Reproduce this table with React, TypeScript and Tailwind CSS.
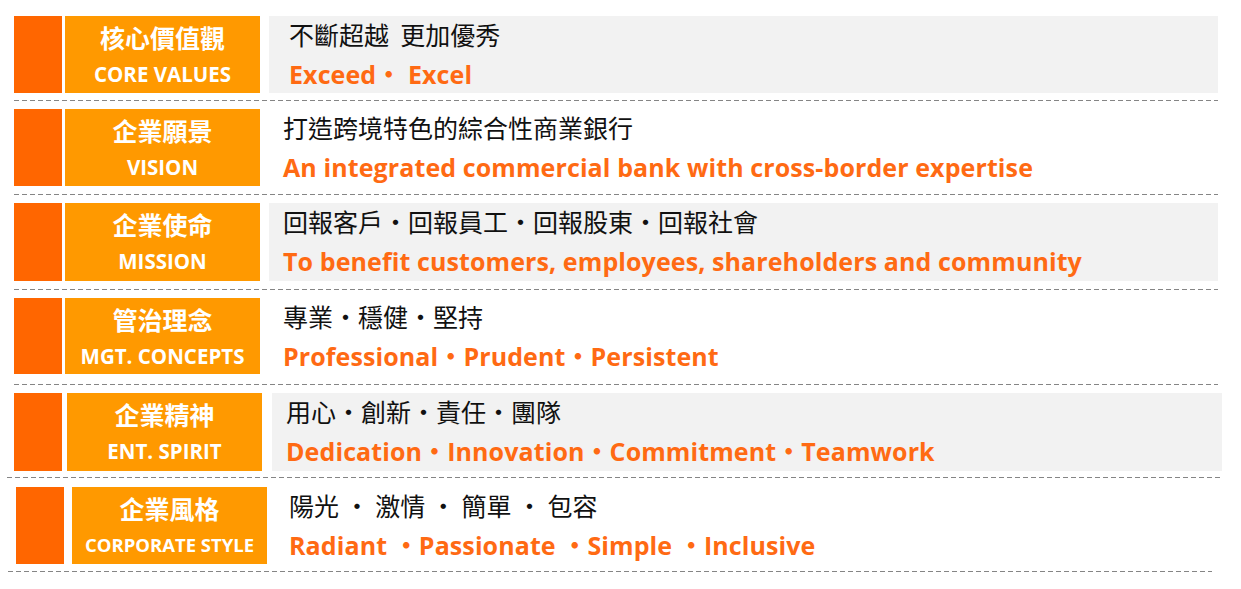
const CJK = '"Noto Sans CJK TC", "Noto Sans CJK SC", sans-serif';

type Row = {
  zh: string;
  en: string;
  lineZh: string;
  lineEn: string;
  shaded: boolean;
  rowCls: string;
  gapA: string;
  gapB: string;
  labelEnCls: string;
  dashCls: string;
  h: string;
};

const rows: Row[] = [
  {
    zh: '核心價值觀',
    en: 'CORE VALUES',
    lineZh: '不斷超越\u00a0\u00a0更加優秀',
    lineEn: 'Exceed・ Excel',
    shaded: true,
    rowCls: 'ml-[14px] mt-[16px]',
    gapA: 'ml-[3px]',
    gapB: 'ml-[9px] w-[949px] pl-[20px]',
    labelEnCls: 'text-[20.5px]',
    dashCls: 'ml-[14px] w-[1204px] mt-[7px]',
    h: 'h-[77px]',
  },
  {
    zh: '企業願景',
    en: 'VISION',
    lineZh: '打造跨境特色的綜合性商業銀行',
    lineEn: 'An integrated commercial bank with cross-border expertise',
    shaded: false,
    rowCls: 'ml-[14px] mt-[8px]',
    gapA: 'ml-[3px]',
    gapB: 'ml-[9px] w-[949px] pl-[14px]',
    labelEnCls: 'text-[20.5px]',
    dashCls: 'ml-[14px] w-[1204px] mt-[8px]',
    h: 'h-[77px]',
  },
  {
    zh: '企業使命',
    en: 'MISSION',
    lineZh: '回報客戶・回報員工・回報股東・回報社會',
    lineEn: 'To benefit customers, employees, shareholders and community',
    shaded: true,
    rowCls: 'ml-[14px] mt-[8px]',
    gapA: 'ml-[3px]',
    gapB: 'ml-[9px] w-[949px] pl-[14px]',
    labelEnCls: 'text-[20.5px]',
    dashCls: 'ml-[14px] w-[1204px] mt-[8px]',
    h: 'h-[78px]',
  },
  {
    zh: '管治理念',
    en: 'MGT. CONCEPTS',
    lineZh: '專業・穩健・堅持',
    lineEn: 'Professional・Prudent・Persistent',
    shaded: false,
    rowCls: 'ml-[14px] mt-[8px]',
    gapA: 'ml-[3px]',
    gapB: 'ml-[9px] w-[949px] pl-[14px]',
    labelEnCls: 'text-[20.5px]',
    dashCls: 'ml-[14px] w-[1204px] mt-[10px]',
    h: 'h-[76px]',
  },
  {
    zh: '企業精神',
    en: 'ENT. SPIRIT',
    lineZh: '用心・創新・責任・團隊',
    lineEn: 'Dedication・Innovation・Commitment・Teamwork',
    shaded: true,
    rowCls: 'ml-[14px] mt-[8px]',
    gapA: 'ml-[5px]',
    gapB: 'ml-[10px] w-[950px] pl-[14px]',
    labelEnCls: 'text-[20.5px]',
    dashCls: 'ml-[7px] w-[1213px] mt-[6px]',
    h: 'h-[78px]',
  },
  {
    zh: '企業風格',
    en: 'CORPORATE STYLE',
    lineZh: '陽光 ・ 激情 ・ 簡單 ・ 包容',
    lineEn: 'Radiant ・Passionate ・Simple ・Inclusive',
    shaded: false,
    rowCls: 'ml-[16px] mt-[9px]',
    gapA: 'ml-[8px]',
    gapB: 'ml-[9px] w-[940px] pl-[13px]',
    labelEnCls: 'text-[18.5px]',
    dashCls: 'ml-[8px] w-[1204px] mt-[7px]',
    h: 'h-[77px]',
  },
];

function ValueRow({ row }: { row: Row }) {
  return (
    <>
      <div className={`flex ${row.rowCls} ${row.h}`}>
        <div className="w-[48px] shrink-0 bg-[#ff6600]" />
        <div
          className={`${row.gapA} flex w-[195px] shrink-0 flex-col items-center bg-[#ff9900] font-bold text-white`}
        >
          <div className="mt-[6px] text-[25px] leading-[30px]" style={{ fontFamily: CJK }}>
            {row.zh}
          </div>
          <div
            className={`mt-[10px] ${row.labelEnCls} leading-[24px]`}
            style={{ fontFamily: '"Open Sans", "Noto Sans", sans-serif' }}
          >
            {row.en}
          </div>
        </div>
        <div className={`${row.gapB} shrink-0 ${row.shaded ? 'bg-[#f2f2f2]' : 'bg-white'}`}>
          <div className="mt-[1px] text-[25px] leading-[34px] text-[#111]" style={{ fontFamily: CJK }}>
            {row.lineZh}
          </div>
          <div
            className="mt-[5px] whitespace-pre text-[25px] font-bold leading-[36px] tracking-[0.1px] text-[#ff6a13]"
            style={{ fontFamily: `"Open Sans", ${CJK}` }}
          >
            {row.lineEn}
          </div>
        </div>
      </div>
      <div
        className={`${row.dashCls} h-px bg-[linear-gradient(to_right,#858585_5px,transparent_5px)] bg-[length:8px_1px] bg-repeat-x`}
      />
    </>
  );
}

export default function App() {
  return (
    <div className="h-[589px] w-[1241px] overflow-hidden bg-white">
      {rows.map((row) => (
        <ValueRow key={row.zh} row={row} />
      ))}
    </div>
  );
}
